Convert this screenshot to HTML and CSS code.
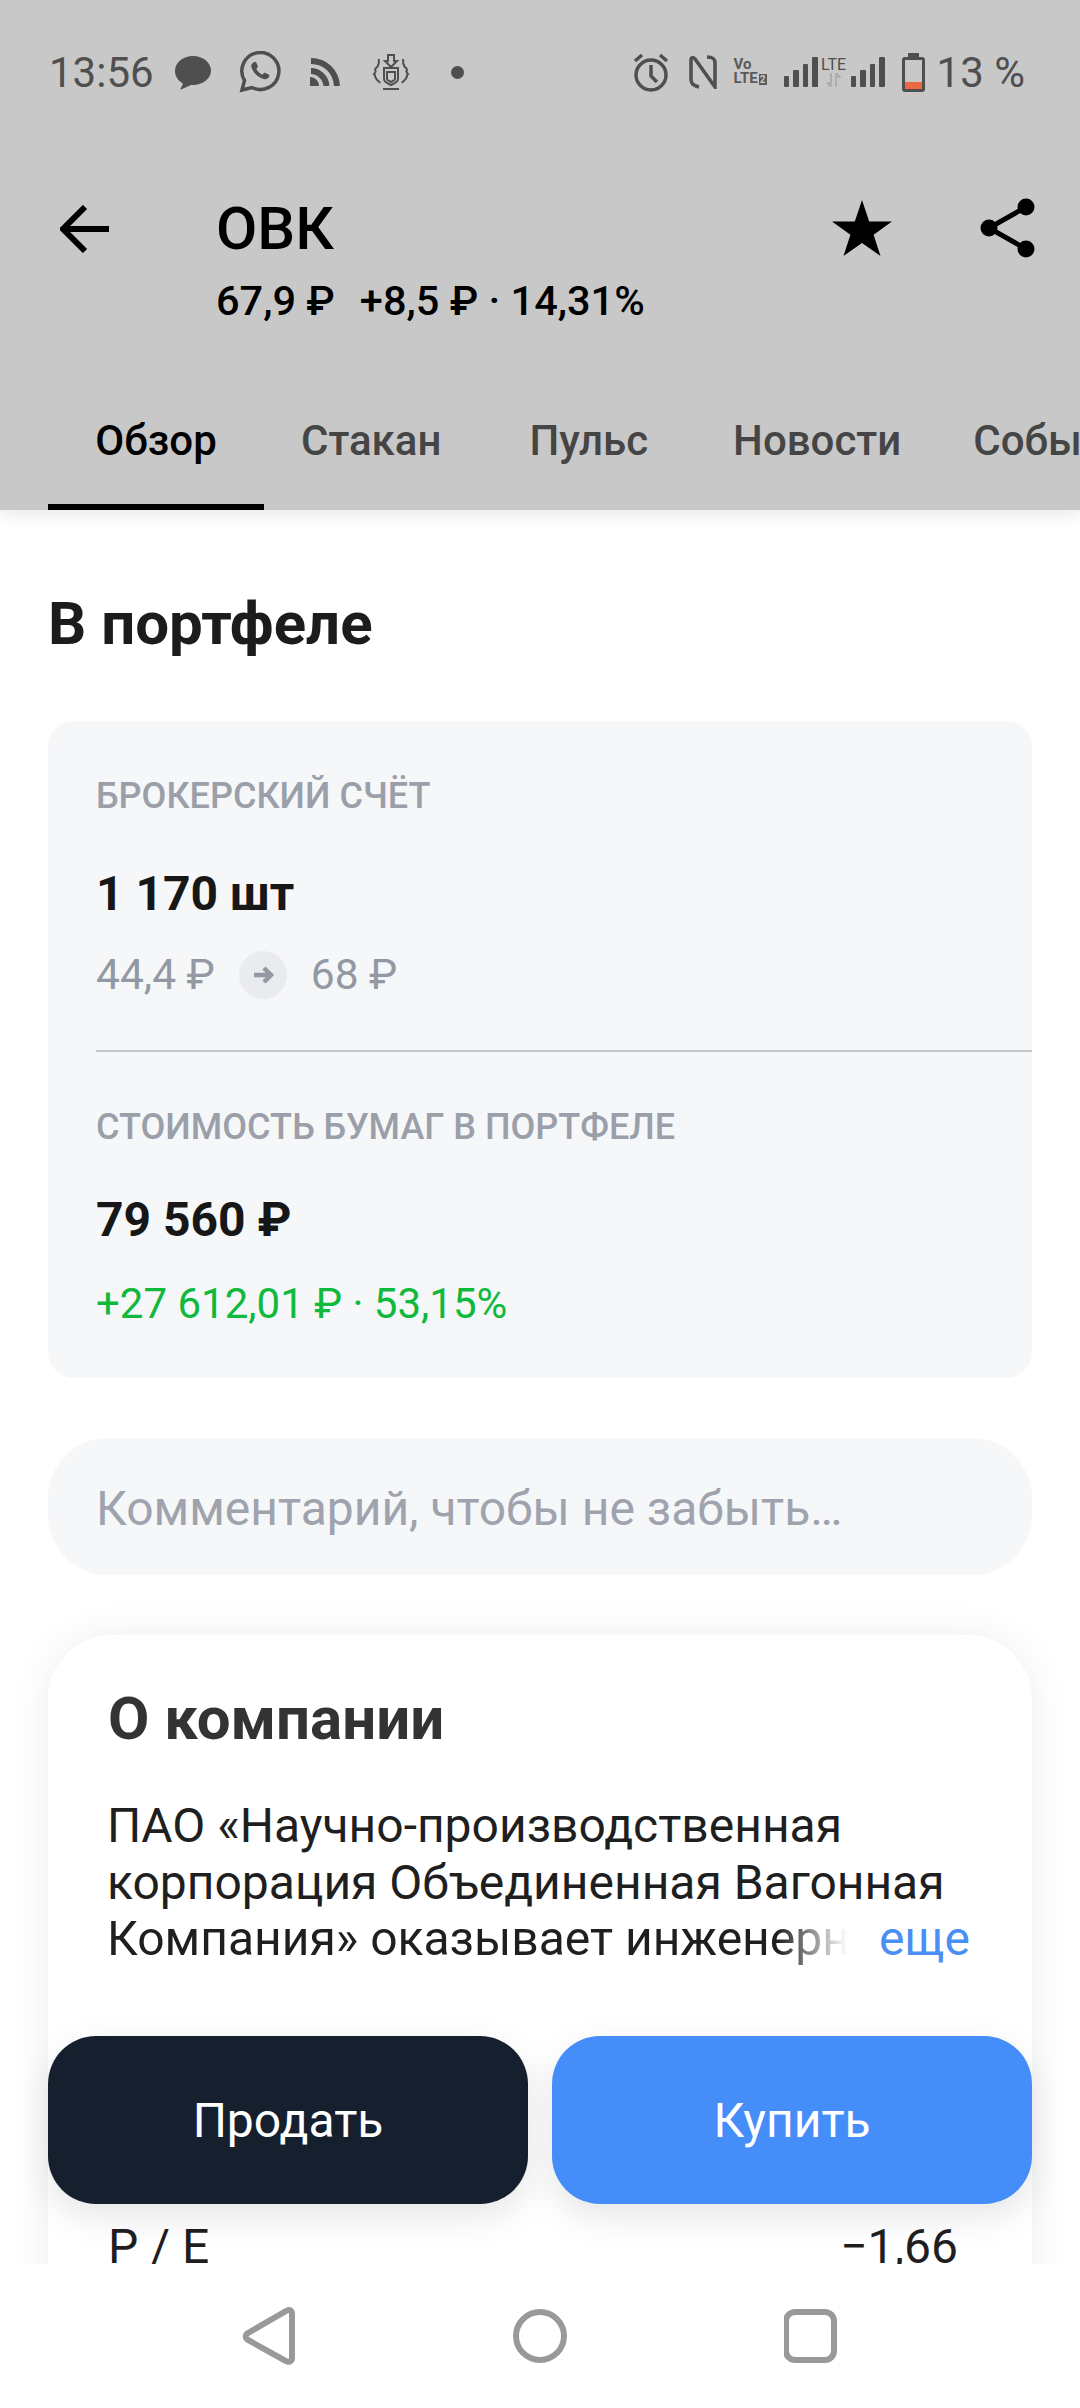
FILE: index.html
```html
<!DOCTYPE html>
<html lang="ru">
<head>
<meta charset="utf-8">
<title>ОВК</title>
<link rel="stylesheet" href="styles.css">
</head>
<body>
<div class="screen">
  <header class="header">
    <div class="status">
      <span class="clock">13:56</span>
      <svg class="ic ic-msg" viewBox="0 0 36 34"><path d="M18 0C8 0 0 6.500 0 15c0 5.500 3.500 10 8 12.500L5 34l11-5c1 .1 1.500.1 2 .1 10 0 18-6.500 18-14.500S28 0 18 0z"/></svg>
      <svg class="ic ic-wa" viewBox="0 0 42 42"><path class="line" d="M3 39l2.500-9.500A18.500 18.500 0 1 1 13 36.500z"/><path d="M14.500 11.500c1-1 2.200-1 2.700 0l1.500 3.300c.3.700 0 1.300-.4 1.800l-1 1.200c1 2.500 3.300 4.700 6 6l1.400-1.500c.5-.5 1-.6 1.700-.3l3.200 1.600c.9.500.9 1.600.2 2.600-1.200 1.800-3.500 2.400-5.500 1.700-6-2-10.700-6.800-12-12.500-.3-1.500.6-2.800 2.200-3.900z"/></svg>
      <svg class="ic ic-rss" viewBox="0 0 30 28"><path class="thick" d="M1 3c14 0 25 10 26 25"/><path class="thick" d="M1 13c8 0 15 7 15.500 15"/><path d="M0 19c5 0 9 4 9 9H0z"/></svg>
      <svg class="ic ic-crest" viewBox="0 0 40 36"><path class="thin" d="M17 1h6v6h3l-6 6-6-6h3zM13 14h14v11c0 3-3 4-7 6-4-2-7-3-7-6zM16 18h8v7c0 1-2 2-4 3-2-1-4-2-4-3zM8 5c-1 3 1 4-1 6 1 2-3 2-3 5 1 1 1 2-1 4 2 1 0 3 2 4 0 2 3 3 4 5M32 5c1 3-1 4 1 6-1 2 3 2 3 5-1 1-1 2 1 4-2 1 0 3-2 4 0 2-3 3-4 5M12 35h16"/></svg>
      <span class="dot"></span>
      <span class="spacer"></span>
      <svg class="ic ic-alarm" viewBox="0 0 36 40"><circle class="line" cx="18" cy="23" r="15"/><path class="line" d="M18 13v11l6 6M2 9l7-6M34 9l-7-6"/></svg>
      <svg class="ic ic-nfc" viewBox="0 0 28 34"><path class="line" d="M10 32C3 30 2 28 2 24V5c0-3 2-3 4-1l20 28V8c0-4-2-6-8-6"/></svg>
      <span class="volte"><span>Vo</span><span>LTE<i class="sim">2</i></span></span>
      <span class="bars"><i class="b1"></i><i class="b2"></i><i class="b3"></i><i class="b4"></i></span>
      <span class="lte">LTE<svg class="lte-arrows" viewBox="0 0 14 14"><path d="M4 0v14M4 14l-4-4h4M9 14V0M9 0l4 4H9"/></svg></span>
      <span class="bars bars-2"><i class="b1"></i><i class="b2"></i><i class="b3"></i><i class="b4"></i></span>
      <span class="battery"><span class="battery-cap"></span><span class="battery-body"><span class="battery-fill"></span></span></span>
      <span class="percent">13 %</span>
    </div>
    <div class="titlebar">
      <svg class="back" viewBox="0 0 50 48"><path d="M49 24H4M25 2L3 24l22 22"/></svg>
      <div class="title">
        <div class="ticker">ОВК</div>
        <div class="quote"><span>67,9 ₽</span><span>+8,5 ₽ · 14,31%</span></div>
      </div>
      <svg class="star" viewBox="0 0 60 56"><path d="M30 0l7.200 21.400H60L41.600 34.800 48.500 56 30 42.900 11.500 56l6.900-21.200L0 21.400h22.800z"/></svg>
      <svg class="share" viewBox="0 0 56 60"><circle cx="46" cy="9" r="8.500"/><circle cx="9" cy="30" r="8.500"/><circle cx="46" cy="51" r="8.500"/><path class="share-line" d="M46 9L9 30l37 21"/></svg>
    </div>
    <nav class="tabs">
      <span class="tab tab-active">Обзор</span>
      <span class="tab tab-book">Стакан</span>
      <span class="tab tab-pulse">Пульс</span>
      <span class="tab tab-news">Новости</span>
      <span class="tab">События</span>
    </nav>
  </header>
  <main class="main">
    <h1 class="heading">В портфеле</h1>
    <section class="card">
      <div class="label">БРОКЕРСКИЙ СЧЁТ</div>
      <div class="amount">1 170 шт</div>
      <div class="prices">
        <span>44,4 ₽</span>
        <span class="arrow"><svg viewBox="0 0 24 24"><path d="M3 12h17M13 5l7 7-7 7"/></svg></span>
        <span>68 ₽</span>
      </div>
      <div class="divider"></div>
      <div class="label label-2">СТОИМОСТЬ БУМАГ В ПОРТФЕЛЕ</div>
      <div class="amount amount-2">79 560 ₽</div>
      <div class="gain">+27 612,01 ₽ · 53,15%</div>
    </section>
    <div class="comment">Комментарий, чтобы не забыть…</div>
    <section class="company">
      <h2 class="company-title">О компании</h2>
      <div class="about">
        <div>ПАО «Научно-производственная</div>
        <div>корпорация Объединенная Вагонная</div>
        <div class="about-last"><span class="about-cut">Компания» оказывает инженерн</span><span class="more">еще</span></div>
      </div>
      <div class="ratio"><span>P / E</span><span>−1,66</span></div>
    </section>
    <div class="actions">
      <button class="btn btn-sell">Продать</button>
      <button class="btn btn-buy">Купить</button>
    </div>
  </main>
  <footer class="navbar">
    <svg class="nav-ic" viewBox="0 0 56 64"><path d="M52 10c0-4-3-5-6-3L8 29c-3 2-3 5 0 7l38 21c3 2 6 0 6-3z"/></svg>
    <svg class="nav-ic" viewBox="0 0 56 64"><circle cx="28" cy="32" r="24"/></svg>
    <svg class="nav-ic" viewBox="0 0 56 64"><rect x="2" y="8" width="48" height="48" rx="9"/></svg>
  </footer>
</div>
</body>
</html>
```
FILE: styles.css
```css
* { box-sizing: border-box; }
html, body { margin: 0; padding: 0; }
body { font-family: Roboto, "Noto Sans", sans-serif; background: #fff; }
.screen { width: 1080px; height: 2408px; display: flex; flex-direction: column; overflow: hidden; }

.header { flex: 0 0 510px; background: #c8c8c8; display: flex; flex-direction: column; position: relative; z-index: 3; box-shadow: 0 4px 18px rgba(0,0,0,.1); }

.status { height: 144px; display: flex; align-items: center; padding: 0 55px 0 49px; color: #4f4f4f; }
.clock { font-size: 42px; width: 106px; }
.ic { display: block; fill: #4f4f4f; flex: none; }
.ic .line { fill: none; stroke: #4f4f4f; stroke-width: 3.5; }
.ic .thick { fill: none; stroke: #4f4f4f; stroke-width: 6; }
.ic .thin { fill: none; stroke: #4f4f4f; stroke-width: 2; }
.ic-msg { width: 36px; height: 34px; margin-left: 20px; margin-top: 2px; }
.ic-wa { width: 42px; height: 42px; margin-left: 28px; }
.ic-rss { width: 30px; height: 28px; margin-left: 29px; }
.ic-crest { width: 40px; height: 36px; margin-left: 31px; }
.dot { width: 13px; height: 13px; border-radius: 50%; background: #4f4f4f; margin-left: 40px; }
.spacer { flex: 1; }
.ic-alarm { width: 36px; height: 40px; }
.ic-nfc { width: 28px; height: 34px; margin-left: 20px; }
.volte { display: flex; flex-direction: column; margin-left: 17px; width: 33px; font-size: 15px; line-height: 14px; font-weight: 700; color: #5a5a5a; }
.sim { font-style: normal; font-size: 10px; background: #5a5a5a; color: #c8c8c8; margin-left: 1px; padding: 0 1px; }
.bars { display: flex; align-items: flex-end; gap: 4px; height: 30px; margin-left: 17px; }
.bars i { display: block; width: 5.500px; background: #4f4f4f; border-radius: 1px; }
.bars-2 { margin-left: 2px; }
.b1 { height: 11px; }
.b2 { height: 17px; }
.b3 { height: 23px; }
.b4 { height: 30px; }
.lte { display: flex; flex-direction: column; align-items: center; width: 30px; margin-left: 1px; font-size: 16px; line-height: 16px; color: #4f4f4f; }
.lte-arrows { width: 14px; height: 14px; fill: none; stroke: #a9a9a9; stroke-width: 1.6; }
.battery { display: flex; flex-direction: column; align-items: center; margin-left: 17px; width: 23px; }
.battery-cap { width: 11px; height: 4px; background: #4f4f4f; }
.battery-body { width: 23px; height: 35px; border: 3.500px solid #4f4f4f; border-radius: 3px; display: flex; align-items: flex-end; }
.battery-fill { flex: 1; height: 7px; background: #ec6a43; }
.percent { font-size: 42px; margin-left: 12px; }

.titlebar { height: 180px; display: flex; align-items: flex-start; position: relative; padding-left: 60px; }
.back { width: 50px; height: 48px; margin-top: 61px; fill: none; stroke: #000; stroke-width: 6; flex: none; }
.title { margin-left: 106px; flex: 1; }
.ticker { font-size: 60px; line-height: 70px; font-weight: 500; color: #000; margin-top: 50px; }
.quote { display: flex; gap: 25px; font-size: 41.500px; line-height: 48px; font-weight: 500; color: #000; margin-top: 13px; }
.star { width: 60px; height: 56px; margin-top: 56px; fill: #000; flex: none; }
.share { width: 56px; height: 60px; margin-top: 54px; margin-left: 88px; margin-right: 44px; fill: #000; flex: none; }
.share-line { fill: none; stroke: #000; stroke-width: 5; }

.tabs { flex: 1; display: flex; padding-left: 48px; white-space: nowrap; overflow: hidden; align-items: stretch; }
.tab { font-size: 42px; font-weight: 500; color: #454545; padding-top: 92px; flex: none; }
.tab-active { color: #000; width: 216px; text-align: center; margin-right: 37px; border-bottom: 6px solid #000; }
.tab-book { margin-right: 88px; }
.tab-pulse { margin-right: 85px; }
.tab-news { margin-right: 72px; }

.main { flex: 1; position: relative; overflow: hidden; padding: 0 48px; background: #fff; min-height: 0; }
.heading { margin: 82px 0 0; font-size: 60px; line-height: 64px; font-weight: 700; color: #1c1c1c; }
.card { margin-top: 65px; height: 657px; background: #f6f7f9; border-radius: 26px; padding: 53px 0 0 48px; }
.label { font-size: 36px; line-height: 44px; font-weight: 500; color: #9a9fa9; }
.amount { font-size: 48px; line-height: 56px; font-weight: 700; color: #171717; margin-top: 48px; }
.prices { display: flex; align-items: center; gap: 24px; font-size: 42.500px; line-height: 48px; color: #9299a3; margin-top: 29px; }
.arrow { width: 48px; height: 48px; border-radius: 50%; background: #e9ebee; display: flex; align-items: center; justify-content: center; }
.arrow svg { width: 24px; height: 24px; fill: none; stroke: #9299a3; stroke-width: 4.500; }
.divider { height: 2px; background: #c6c8cc; margin-top: 51px; }
.label-2 { margin-top: 53px; }
.amount-2 { margin-top: 43px; }
.gain { font-size: 42px; line-height: 48px; color: #0fb93c; margin-top: 32px; }
.comment { margin-top: 60px; height: 137px; border-radius: 60px; background: #f6f7f9; padding: 3px 0 0 48px; display: flex; align-items: center; font-size: 48px; color: #9ea3ad; }

.company { margin-top: 60px; height: 800px; background: #fff; border-radius: 64px; padding: 48px 60px 0; box-shadow: 0 0 42px rgba(0,0,0,.07); }
.company-title { margin: 0; font-size: 60px; line-height: 72px; font-weight: 700; color: #333; }
.about { font-size: 48px; line-height: 56.500px; color: #1f1f1f; margin-top: 43px; margin-left: -1px; }
.about-last { white-space: nowrap; position: relative; }
.about-cut { display: block; width: 740px; overflow: hidden; -webkit-mask-image: linear-gradient(to right, #000 670px, transparent 740px); mask-image: linear-gradient(to right, #000 670px, transparent 740px); }
.more { color: #4a8ff5; position: absolute; right: 2px; top: 0; }
.ratio { display: flex; justify-content: space-between; font-size: 48px; line-height: 56px; color: #1f1f1f; margin-top: 251px; padding-right: 14px; }

.actions { position: absolute; left: 48px; right: 48px; top: 1526px; display: flex; gap: 24px; }
.btn { flex: 1; height: 168px; border: 0; border-radius: 48px; font-family: inherit; font-size: 48px; color: #fff; box-shadow: 0 12px 36px rgba(0,0,0,.1); }
.btn-sell { background: #151f2d; }
.btn-buy { background: #458df9; }

.navbar { flex: 0 0 144px; background: #fff; display: flex; justify-content: center; gap: 216px; padding-top: 40px; position: relative; z-index: 2; }
.nav-ic { width: 56px; height: 64px; fill: none; stroke: #999; stroke-width: 6; flex: none; }
```
